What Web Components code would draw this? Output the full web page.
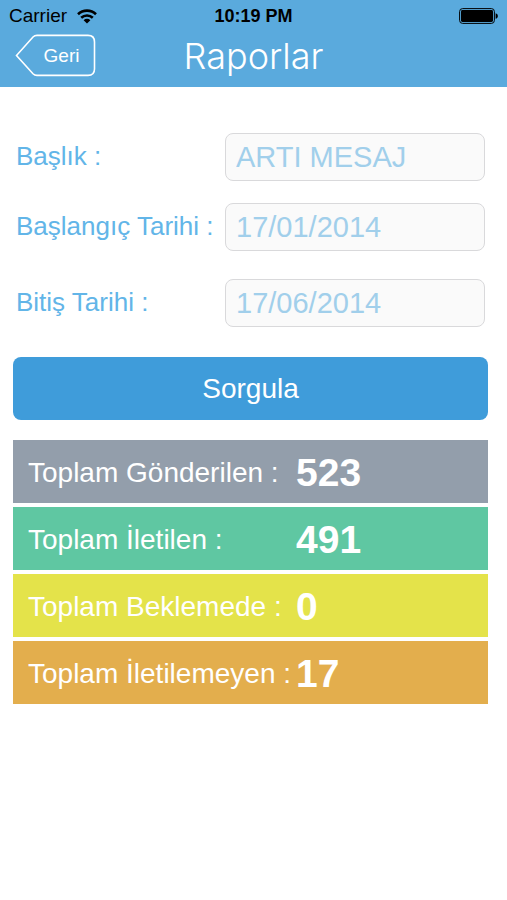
<!DOCTYPE html>
<html lang="tr">
<head>
    <meta charset="utf-8">
    <meta name="viewport" content="width=device-width, initial-scale=1">
    <title>Raporlar</title>
    <style>
        body {
            margin: 0;
            background-color: #fff;
            font-family: "Liberation Sans", Arial, sans-serif;
        }
    </style>
</head>
<body>
    <report-page>
        <status-bar slot="top" carrier="Carrier" time="10:19 PM"></status-bar>
        <nav-bar slot="top" back="Geri">Raporlar</nav-bar>

        <form-field value="ARTI MESAJ">Başlık :</form-field>
        <form-field value="17/01/2014">Başlangıç Tarihi :</form-field>
        <form-field value="17/06/2014" class="last">Bitiş Tarihi :</form-field>
        <submit-button>Sorgula</submit-button>

        <total-row slot="totals" value="523" style="--row-color: #939eab">Toplam Gönderilen :</total-row>
        <total-row slot="totals" value="491" style="--row-color: #5fc7a2">Toplam İletilen :</total-row>
        <total-row slot="totals" value="0" style="--row-color: #e4e34a">Toplam Beklemede :</total-row>
        <total-row slot="totals" value="17" style="--row-color: #e3ae4d">Toplam İletilemeyen :</total-row>
    </report-page>

    <script>
        class ReportPage extends HTMLElement {
            constructor() {
                super();
                this.attachShadow({mode: 'open'});
                this.shadowRoot.innerHTML = `
                    <style>
                        :host {
                            display: block;
                        }
                        header {
                            background-color: #5aaadd;
                        }
                        main {
                            padding: 46px 19px 24px 13px;
                        }
                        .form {
                            display: flex;
                            flex-direction: column;
                            gap: 22px;
                        }
                        ::slotted(form-field.last) {
                            padding: 6px 0 8px;
                        }
                        .totals {
                            display: flex;
                            flex-direction: column;
                            gap: 4px;
                            margin-top: 20px;
                        }
                    </style>
                    <header><slot name="top"></slot></header>
                    <main>
                        <div class="form"><slot></slot></div>
                        <div class="totals"><slot name="totals"></slot></div>
                    </main>
                `;
            }
        }

        class StatusBar extends HTMLElement {
            constructor() {
                super();
                this.attachShadow({mode: 'open'});
                this.shadowRoot.innerHTML = `
                    <style>
                        :host {
                            display: grid;
                            grid-template-columns: 1fr auto 1fr;
                            align-items: center;
                            height: 32px;
                            padding: 0 9px;
                            color: #000;
                            font-size: 19px;
                        }
                        .left {
                            display: flex;
                            align-items: center;
                            gap: 10px;
                        }
                        .time {
                            font-size: 18px;
                            font-weight: bold;
                        }
                        .battery {
                            justify-self: end;
                        }
                        svg {
                            display: block;
                        }
                    </style>
                    <div class="left">
                        <span>${this.getAttribute('carrier')}</span>
                        <svg width="20" height="15" viewBox="0 0 20 15" fill="none" stroke="#000" stroke-width="2.6">
                            <path d="M1 5.2a13 13 0 0 1 18 0"/>
                            <path d="M4.2 8.8a8.4 8.4 0 0 1 11.6 0"/>
                            <path d="M10 14.6 6.6 11.2a4.9 4.9 0 0 1 6.8 0z" fill="#000" stroke="none"/>
                        </svg>
                    </div>
                    <span class="time">${this.getAttribute('time')}</span>
                    <svg class="battery" width="39" height="16" viewBox="0 0 39 16">
                        <rect x=".6" y=".6" width="34.8" height="14.8" rx="3" fill="none" stroke="#000" stroke-width="1"/>
                        <rect x="2" y="2" width="32" height="12" rx="1.4"/>
                        <path d="M36.6 5.2c3 .6 3 5 0 5.6z"/>
                    </svg>
                `;
            }
        }

        class NavBar extends HTMLElement {
            constructor() {
                super();
                this.attachShadow({mode: 'open'});
                this.shadowRoot.innerHTML = `
                    <style>
                        :host {
                            display: grid;
                            grid-template-columns: 1fr auto 1fr;
                            align-items: start;
                            height: 55px;
                            padding: 0 15px;
                            color: #fff;
                        }
                        button {
                            display: grid;
                            align-items: center;
                            justify-self: start;
                            margin: 2px 0 0;
                            padding: 0;
                            border: 0;
                            background: none;
                            color: inherit;
                            font: 19px "Liberation Sans", Arial, sans-serif;
                            cursor: pointer;
                        }
                        button > * {
                            grid-area: 1 / 1;
                        }
                        button span {
                            padding-left: 12px;
                        }
                        h1 {
                            margin: 0;
                            font-family: Inter, "Liberation Sans", sans-serif;
                            font-size: 36px;
                            font-weight: 300;
                            line-height: 48px;
                        }
                    </style>
                    <button type="button">
                        <svg width="81" height="43" viewBox="0 0 81 43" fill="none" stroke="#fff" stroke-width="1.6">
                            <path d="M1.5 21.5 18 3Q19.6 1.4 22 1.4H73Q79.5 1.4 79.5 8V35Q79.5 41.4 73 41.4H22Q19.6 41.4 18 39.8Z"/>
                        </svg>
                        <span>${this.getAttribute('back')}</span>
                    </button>
                    <h1><slot></slot></h1>
                `;
            }
        }

        class FormField extends HTMLElement {
            constructor() {
                super();
                this.attachShadow({mode: 'open'});
                this.shadowRoot.innerHTML = `
                    <style>
                        :host {
                            display: block;
                        }
                        .field {
                            display: grid;
                            grid-template-columns: 209px 1fr;
                            align-items: center;
                            padding: 0 3px;
                        }
                        label {
                            color: #62b5e8;
                            font-size: 26px;
                            line-height: 44px;
                            white-space: nowrap;
                            padding-bottom: 2px;
                        }
                        input {
                            box-sizing: border-box;
                            width: 100%;
                            height: 48px;
                            padding: 0 10px;
                            border: 1px solid #d9d9db;
                            border-radius: 8px;
                            background-color: #fafafa;
                            color: #a1cfeb;
                            font: 29px "Liberation Sans", Arial, sans-serif;
                        }
                    </style>
                    <div class="field">
                        <label for="input"><slot></slot></label>
                        <input id="input" type="text" value="${this.getAttribute('value')}">
                    </div>
                `;
            }
        }

        class SubmitButton extends HTMLElement {
            constructor() {
                super();
                this.attachShadow({mode: 'open'});
                this.shadowRoot.innerHTML = `
                    <style>
                        :host {
                            display: block;
                        }
                        button {
                            display: block;
                            width: 100%;
                            height: 63px;
                            padding: 0;
                            border: 0;
                            border-radius: 8px;
                            background-color: #3f9cda;
                            color: #fff;
                            font: 28px "Liberation Sans", Arial, sans-serif;
                            cursor: pointer;
                        }
                    </style>
                    <button type="button"><slot></slot></button>
                `;
            }
        }

        class TotalRow extends HTMLElement {
            constructor() {
                super();
                this.attachShadow({mode: 'open'});
                this.shadowRoot.innerHTML = `
                    <style>
                        :host {
                            display: grid;
                            grid-template-columns: 268px 1fr;
                            align-items: center;
                            height: 63px;
                            padding-left: 15px;
                            background-color: var(--row-color);
                            color: #fff;
                            font-size: 28px;
                            white-space: nowrap;
                        }
                        span, strong {
                            padding-top: 2px;
                        }
                        strong {
                            font-size: 39px;
                        }
                    </style>
                    <span><slot></slot></span>
                    <strong>${this.getAttribute('value')}</strong>
                `;
            }
        }

        customElements.define('report-page', ReportPage);
        customElements.define('status-bar', StatusBar);
        customElements.define('nav-bar', NavBar);
        customElements.define('form-field', FormField);
        customElements.define('submit-button', SubmitButton);
        customElements.define('total-row', TotalRow);
    </script>
</body>
</html>
